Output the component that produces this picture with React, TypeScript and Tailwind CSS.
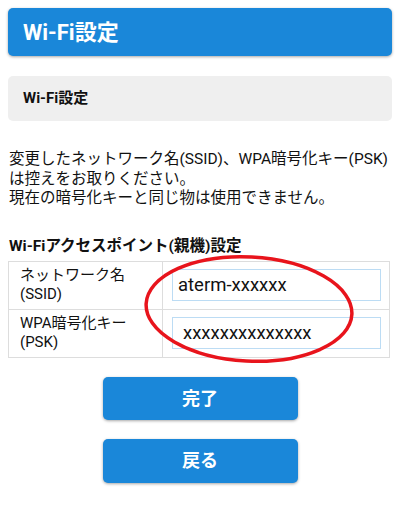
export default function App() {
  const font = { fontFamily: 'Roboto, "Noto Sans CJK JP", sans-serif' };
  return (
    <div className="relative h-[506px] w-[400px] bg-white text-[#111]" style={font}>
      <div className="px-2 pt-2">
        <div className="flex h-[48px] items-center rounded-[5px] bg-[#1a87d9] pl-[15px] shadow-[0_1px_3px_rgba(0,0,0,0.35)]">
          <h1 className="text-[22px] font-bold text-white">Wi-Fi設定</h1>
        </div>
        <div className="mt-[20px] flex h-[45px] items-center rounded-[5px] bg-[#efefef] pl-[15px]">
          <h2 className="text-[15px] font-bold">Wi-Fi設定</h2>
        </div>
      </div>

      <p className="mt-[29px] px-[9px] text-[15.5px] leading-[19.5px]">
        変更したネットワーク名(SSID)、WPA暗号化キー(PSK)は控えをお取りください。
        <br />
        現在の暗号化キーと同じ物は使用できません。
      </p>

      <h3 className="mt-[27px] px-[9px] text-[15.5px] font-bold leading-[20px]">
        Wi-Fiアクセスポイント(親機)設定
      </h3>

      <table className="mt-[5px] ml-2 w-[382px] border-collapse text-[15px] leading-[19px]">
        <tbody>
          <tr className="h-[48px]">
            <td className="w-[154px] border border-[#dddddd] pl-[11px]">
              ネットワーク名
              <br />
              (SSID)
            </td>
            <td className="border border-[#dddddd] pl-[9px] pr-[8px]">
              <input
                readOnly
                value="aterm-xxxxxx"
                className="h-[32px] w-full border border-[#bcdcf4] bg-white pl-[5px] text-[18.5px] outline-none"
                style={font}
              />
            </td>
          </tr>
          <tr className="h-[48px]">
            <td className="border border-[#dddddd] pl-[11px]">
              WPA暗号化キー
              <br />
              (PSK)
            </td>
            <td className="border border-[#dddddd] pl-[9px] pr-[8px]">
              <input
                readOnly
                value="xxxxxxxxxxxxxx"
                className="h-[32px] w-full border border-[#bcdcf4] bg-white pl-[10px] text-[18.5px] outline-none"
                style={font}
              />
            </td>
          </tr>
        </tbody>
      </table>

      <div className="mt-[19px] flex flex-col items-center gap-[19px]">
        <button className="h-[43px] w-[195px] rounded-[5px] bg-[#1a87d9] text-[18px] font-bold text-white shadow-[0_1px_3px_rgba(0,0,0,0.35)]">
          完了
        </button>
        <button className="h-[44px] w-[195px] rounded-[5px] bg-[#1a87d9] text-[18px] font-bold text-white shadow-[0_1px_3px_rgba(0,0,0,0.35)]">
          戻る
        </button>
      </div>

      <svg className="pointer-events-none absolute left-[140px] top-[250px]" width="220" height="120" viewBox="0 0 220 120">
        <ellipse cx="109" cy="59" rx="103" ry="52" fill="none" stroke="#e8141c" strokeWidth="3.5" transform="rotate(3 109 59)" />
      </svg>
    </div>
  );
}
